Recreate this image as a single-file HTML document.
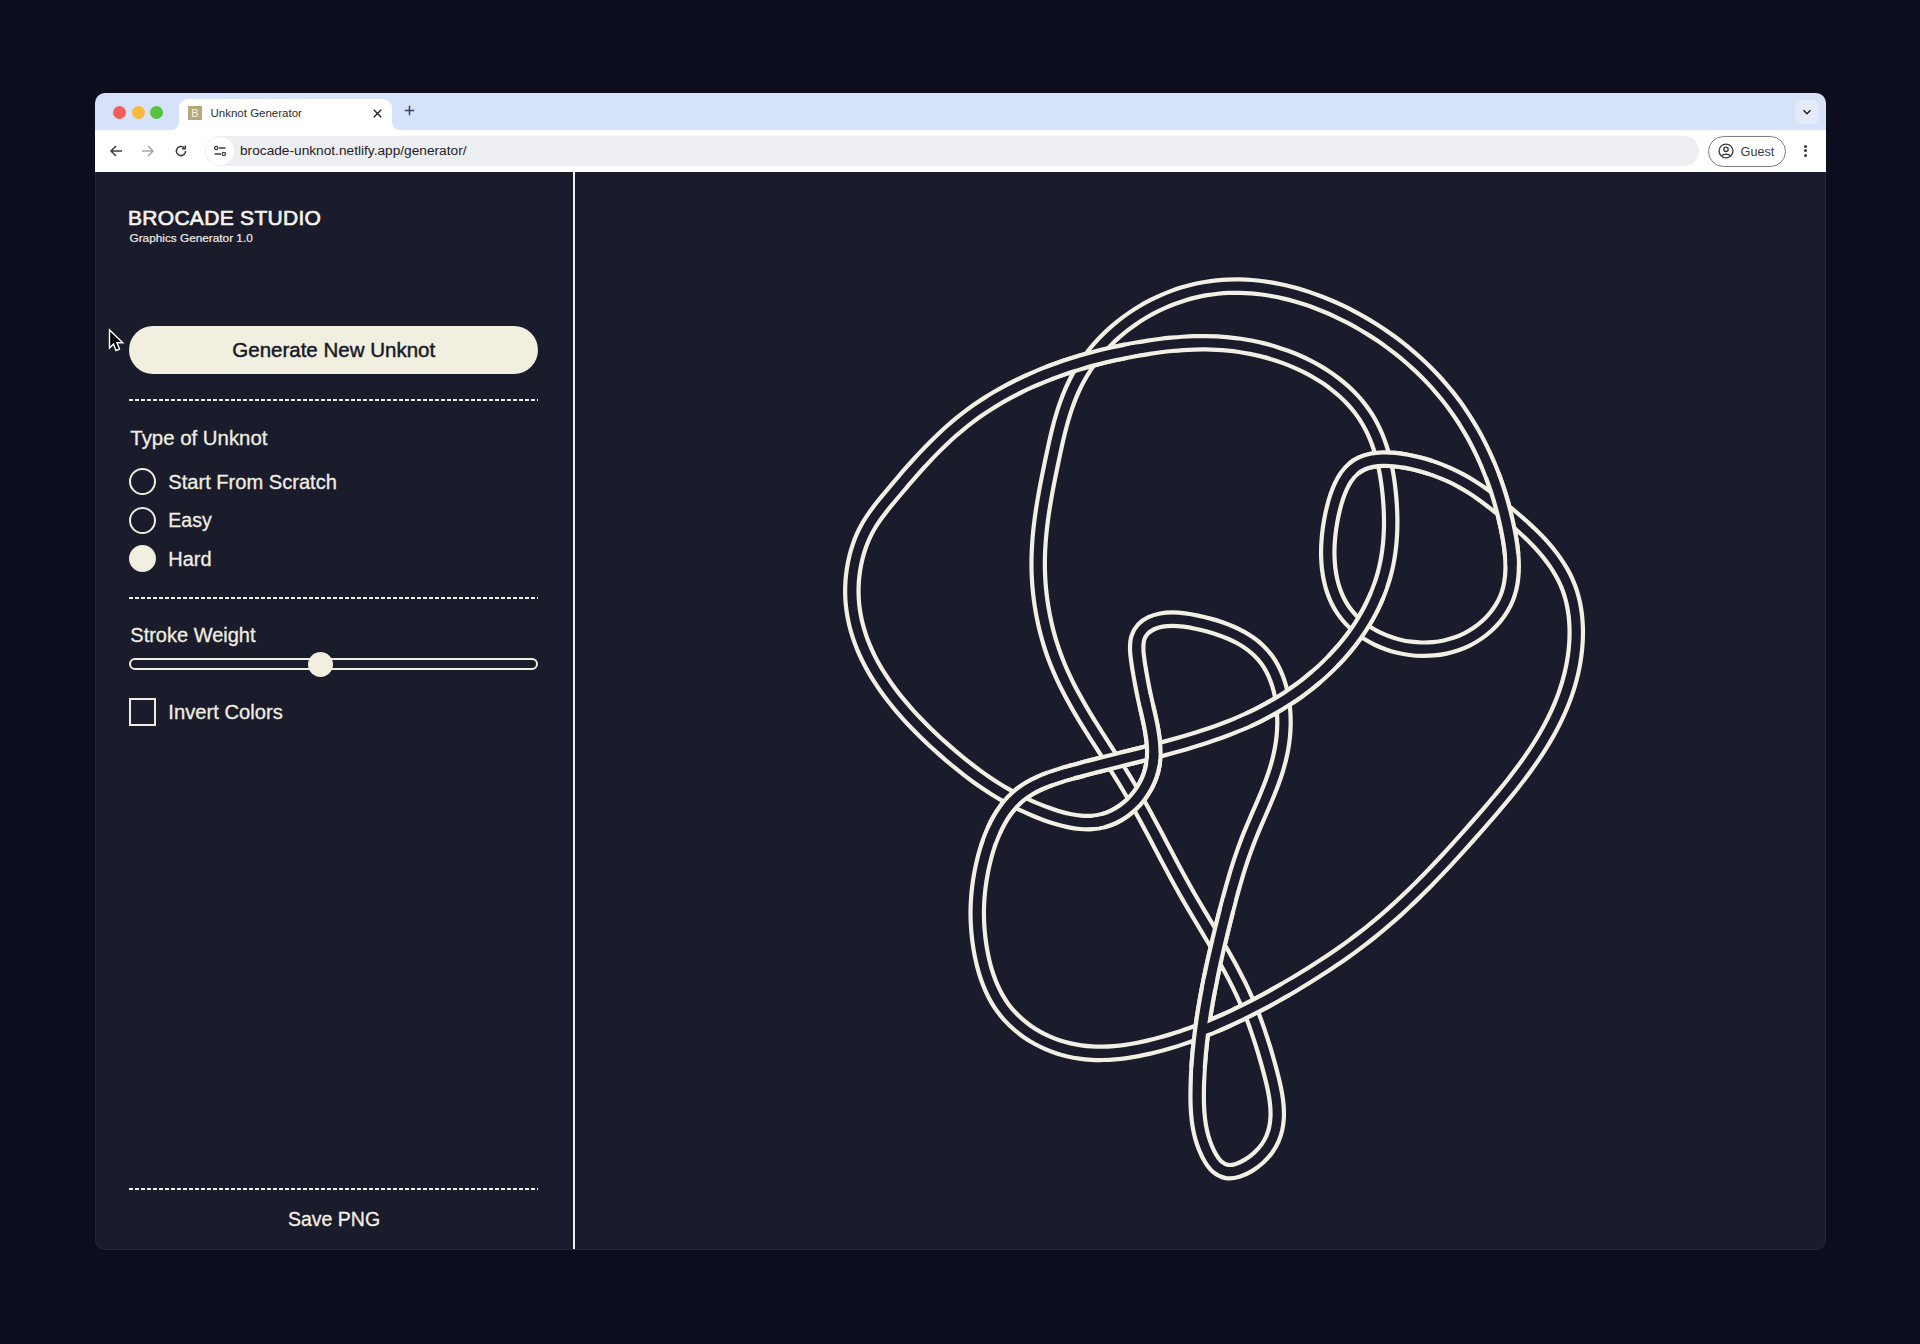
<!DOCTYPE html>
<html><head><meta charset="utf-8">
<style>
*{margin:0;padding:0;box-sizing:border-box}
html,body{width:1920px;height:1344px;overflow:hidden;background:#0c0d1f;font-family:"Liberation Sans",sans-serif}
.abs{position:absolute}
#win{position:absolute;left:95px;top:93px;width:1731px;height:1157px;border-radius:10px;overflow:hidden;background:#1a1b2b}
#tabbar{position:absolute;left:0;top:0;width:1731px;height:37px;background:#d5e2f9}
#toolbar{position:absolute;left:0;top:37px;width:1731px;height:42px;background:#fff}
#content{position:absolute;left:0;top:79px;width:1731px;height:1078px;background:#1a1b2b}
.t{position:absolute;white-space:nowrap;line-height:1}
.dash{position:absolute;left:34px;width:409px;height:2px;background:repeating-linear-gradient(to right,#f0eee0 0 4px,transparent 4px 6px)}
.radio{position:absolute;left:34px;width:27px;height:27px;border-radius:50%;border:2.2px solid #efede0}
.sb{-webkit-text-stroke:0.3px currentColor}
</style></head><body>
<div id="win">
  <div id="tabbar">
    <div class="abs" style="left:18px;top:12.5px;width:13px;height:13px;border-radius:50%;background:#f25f58"></div>
    <div class="abs" style="left:36.5px;top:12.5px;width:13px;height:13px;border-radius:50%;background:#f7b83c"></div>
    <div class="abs" style="left:55px;top:12.5px;width:13px;height:13px;border-radius:50%;background:#58c13f"></div>
    <!-- tab -->
    <div class="abs" style="left:84px;top:6px;width:213px;height:32px;background:#fff;border-radius:9px 9px 0 0"></div>
    <div class="abs" style="left:76px;top:29px;width:8px;height:8px;background:#fff"></div>
    <div class="abs" style="left:68px;top:21px;width:16px;height:16px;background:#d5e2f9;border-radius:0 0 8px 0"></div>
    <div class="abs" style="left:297px;top:29px;width:8px;height:8px;background:#fff"></div>
    <div class="abs" style="left:297px;top:21px;width:16px;height:16px;background:#d5e2f9;border-radius:0 0 0 8px"></div>
    <div class="abs" style="left:93px;top:13px;width:14px;height:14px;background:#b7a878;color:#f7f3e6;font-size:11px;line-height:14px;text-align:center">B</div>
    <div class="t" style="left:115.5px;top:15px;font-size:11.5px;color:#2a2c30">Unknot Generator</div>
    <svg class="abs" style="left:277px;top:15px" width="11" height="11" viewBox="0 0 11 11"><path d="M1.8 1.8L9.2 9.2M9.2 1.8L1.8 9.2" stroke="#2b2b2b" stroke-width="1.5"/></svg>
    <svg class="abs" style="left:309px;top:12px" width="11" height="11" viewBox="0 0 11 11"><path d="M5.5 0.8V10.2M0.8 5.5H10.2" stroke="#3d4350" stroke-width="1.5"/></svg>
    <div class="abs" style="left:1700px;top:7px;width:24px;height:24px;border-radius:7px;background:#e3eafa"></div>
    <svg class="abs" style="left:1707px;top:14px" width="10" height="10" viewBox="0 0 10 10"><path d="M1.5 3.2L5 6.7L8.5 3.2" stroke="#222" stroke-width="1.5" fill="none"/></svg>
  </div>
  <div id="toolbar">
    <svg class="abs" style="left:14px;top:14px" width="14" height="14" viewBox="0 0 14 14"><path d="M13 7H2.2M7 2L2 7L7 12" stroke="#3b3d42" stroke-width="1.5" fill="none"/></svg>
    <svg class="abs" style="left:46px;top:14px" width="14" height="14" viewBox="0 0 14 14"><path d="M1 7H11.8M7 2L12 7L7 12" stroke="#a4a6ab" stroke-width="1.5" fill="none"/></svg>
    <svg class="abs" style="left:79px;top:14px" width="14" height="14" viewBox="0 0 14 14"><path d="M11.6 7A4.6 4.6 0 1 1 10.3 3.8" stroke="#3b3d42" stroke-width="1.5" fill="none"/><path d="M11.3 1.5V4.8H8" stroke="#3b3d42" stroke-width="1.5" fill="none"/></svg>
    <div class="abs" style="left:110px;top:6px;width:1494px;height:30px;border-radius:15px;background:#eceef2"></div>
    <div class="abs" style="left:111px;top:7px;width:28px;height:28px;border-radius:50%;background:#fff"></div>
    <svg class="abs" style="left:118px;top:14px" width="14" height="14" viewBox="0 0 14 14"><circle cx="3.2" cy="4" r="1.6" stroke="#3b3d42" stroke-width="1.3" fill="none"/><path d="M6 4H12.5M1.5 10H8" stroke="#3b3d42" stroke-width="1.5"/><circle cx="10.8" cy="10" r="1.6" stroke="#3b3d42" stroke-width="1.3" fill="none"/></svg>
    <div class="t" style="left:145px;top:14px;font-size:13.7px;color:#1f2024">brocade-unknot.netlify.app/generator/</div>
    <div class="abs" style="left:1613px;top:6px;width:78px;height:31px;border-radius:16px;border:1px solid #7b7e85;background:#fff"></div>
    <svg class="abs" style="left:1623px;top:13px" width="16" height="16" viewBox="0 0 16 16"><circle cx="8" cy="8" r="6.9" stroke="#3b3d42" stroke-width="1.4" fill="none"/><circle cx="8" cy="6.3" r="2.2" stroke="#3b3d42" stroke-width="1.4" fill="none"/><path d="M3.6 12.9C5 10.6 11 10.6 12.4 12.9" stroke="#3b3d42" stroke-width="1.4" fill="none"/></svg>
    <div class="t" style="left:1645.6px;top:15.6px;font-size:12.6px;color:#3b3d42">Guest</div>
    <div class="abs" style="left:1709px;top:14.5px;width:3px;height:3px;border-radius:50%;background:#3b3d42"></div>
    <div class="abs" style="left:1709px;top:19px;width:3px;height:3px;border-radius:50%;background:#3b3d42"></div>
    <div class="abs" style="left:1709px;top:23.5px;width:3px;height:3px;border-radius:50%;background:#3b3d42"></div>
  </div>
  <div id="content">
    <!-- sidebar -->
    <div class="abs" style="left:478px;top:0;width:2px;height:1078px;background:#efeef3"></div>
    <div class="t" style="left:33px;top:35px;font-size:21px;color:#f4f2ea;letter-spacing:0.3px;-webkit-text-stroke:0.7px #f4f2ea">BROCADE STUDIO</div>
    <div class="t" style="left:34.5px;top:61px;font-size:11.8px;color:#efede5;-webkit-text-stroke:0.2px #efede5">Graphics Generator 1.0</div>
    <div class="abs" style="left:34px;top:154px;width:409px;height:48px;border-radius:24px;background:#f1efdf"></div>
    <div class="t" style="left:137.3px;top:167.8px;font-size:20.5px;color:#181926;-webkit-text-stroke:0.45px #181926">Generate New Unknot</div>
    <div class="dash" style="top:227px"></div>
    <div class="t sb" style="left:35.3px;top:256.2px;font-size:20.4px;color:#efede2">Type of Unknot</div>
    <div class="radio" style="top:296.4px"></div>
    <div class="t sb" style="left:73.3px;top:300px;font-size:20.1px;color:#efede2">Start From Scratch</div>
    <div class="radio" style="top:334.8px"></div>
    <div class="t sb" style="left:73.3px;top:338.6px;font-size:19.5px;color:#efede2">Easy</div>
    <div class="radio" style="top:373px;background:#f1efdf"></div>
    <div class="t sb" style="left:73.3px;top:377px;font-size:20px;color:#efede2">Hard</div>
    <div class="dash" style="top:425px"></div>
    <div class="t sb" style="left:35.3px;top:453.4px;font-size:20px;color:#efede2">Stroke Weight</div>
    <div class="abs" style="left:34px;top:485.7px;width:409px;height:12px;border-radius:6px;border:2px solid #efede0"></div>
    <div class="abs" style="left:213.2px;top:479.5px;width:25px;height:25px;border-radius:50%;background:#f1efdf"></div>
    <div class="abs" style="left:34px;top:526px;width:27px;height:28px;border:2.2px solid #efede0"></div>
    <div class="t sb" style="left:73.3px;top:530.3px;font-size:20.2px;color:#efede2">Invert Colors</div>
    <div class="dash" style="top:1016px"></div>
    <div class="t sb" style="left:193px;top:1037.5px;font-size:19.5px;color:#f2f0e6">Save PNG</div>
    <div class="abs" style="left:0;top:0;width:1731px;height:1078px;border:1px solid #25273a;border-top:none;border-radius:0 0 10px 10px"></div>
  </div>
</div>
<svg class="abs" style="left:104px;top:325px" width="24" height="30" viewBox="0 0 24 30"><path d="M5.5 5V23L9.5 19L12 25.5L15.5 24.2L13 17.8H18.8Z" fill="#000" stroke="#fff" stroke-width="1.4" stroke-linejoin="miter"/></svg>
<!--KNOT--><svg class="abs" style="left:0;top:0" width="1920" height="1344" viewBox="0 0 1920 1344">
<g fill="none" stroke-linejoin="round">
<path d="M980.59 875.61C981.26 871.81 982.02 867.95 982.90 864.12C983.77 860.28 984.75 856.41 985.85 852.60C986.95 848.79 988.17 844.98 989.51 841.26C990.86 837.54 992.33 833.86 993.94 830.30C995.56 826.75 997.30 823.26 999.20 819.94C1001.09 816.61 1003.13 813.39 1005.33 810.36C1007.53 807.34 1009.88 804.44 1012.41 801.78C1014.93 799.12 1017.63 796.65 1020.48 794.40C1023.33 792.15 1026.37 790.14 1029.51 788.27C1032.66 786.40 1035.97 784.74 1039.35 783.19C1042.73 781.63 1046.25 780.25 1049.81 778.94C1053.36 777.62 1057.03 776.45 1060.70 775.30C1064.37 774.16 1068.12 773.11 1071.85 772.07C1075.58 771.02 1079.34 770.02 1083.09 769.02C1086.84 768.03 1090.60 767.06 1094.37 766.09C1098.13 765.13 1101.89 764.18 1105.66 763.24C1109.42 762.30 1113.19 761.37 1116.96 760.44C1120.72 759.50 1124.49 758.58 1128.25 757.65C1132.01 756.72 1135.77 755.80 1139.52 754.86C1143.27 753.92 1147.02 752.98 1150.76 752.02C1154.50 751.07 1158.24 750.10 1161.96 749.12C1165.69 748.13 1169.40 747.13 1173.10 746.11C1176.81 745.09 1180.50 744.04 1184.18 742.97C1187.86 741.90 1191.52 740.80 1195.17 739.67C1198.82 738.54 1202.46 737.38 1206.07 736.18C1209.69 734.98 1213.29 733.75 1216.87 732.47C1220.44 731.19 1224.00 729.87 1227.54 728.51C1231.08 727.14 1234.59 725.73 1238.09 724.26C1241.58 722.79 1245.05 721.28 1248.49 719.70C1251.93 718.13 1255.35 716.50 1258.73 714.80C1262.12 713.11 1265.48 711.35 1268.81 709.53C1272.14 707.71 1275.44 705.82 1278.71 703.86C1281.98 701.89 1285.21 699.86 1288.41 697.76C1291.60 695.66 1294.76 693.49 1297.88 691.25C1300.99 689.02 1304.06 686.71 1307.08 684.34C1310.10 681.97 1313.07 679.54 1315.98 677.04C1318.89 674.54 1321.75 671.98 1324.55 669.36C1327.34 666.74 1330.08 664.05 1332.75 661.31C1335.41 658.56 1338.01 655.76 1340.54 652.90C1343.07 650.04 1345.52 647.12 1347.90 644.15C1350.27 641.17 1352.57 638.14 1354.78 635.06C1356.99 631.97 1359.13 628.83 1361.16 625.65C1363.20 622.46 1365.15 619.21 1367.00 615.92C1368.85 612.63 1370.61 609.28 1372.26 605.89C1373.92 602.50 1375.47 599.06 1376.92 595.58C1378.36 592.09 1379.71 588.56 1380.93 584.98C1382.15 581.41 1383.27 577.78 1384.26 574.12C1385.25 570.46 1386.13 566.74 1386.88 563.00C1387.64 559.25 1388.26 555.46 1388.78 551.65C1389.30 547.83 1389.71 543.98 1390.01 540.11C1390.32 536.25 1390.51 532.35 1390.61 528.45C1390.72 524.54 1390.72 520.62 1390.64 516.70C1390.57 512.78 1390.39 508.84 1390.15 504.92C1389.90 501.00 1389.58 497.07 1389.18 493.17C1388.78 489.26 1388.32 485.36 1387.76 481.50C1387.20 477.63 1386.57 473.78 1385.83 469.97C1385.09 466.17 1384.26 462.39 1383.32 458.68C1382.37 454.96 1381.33 451.29 1380.16 447.68C1378.99 444.08 1377.71 440.53 1376.28 437.07C1374.86 433.61 1373.31 430.21 1371.61 426.91C1369.92 423.61 1368.08 420.39 1366.09 417.27C1364.10 414.15 1361.95 411.13 1359.68 408.21C1357.41 405.29 1355.00 402.46 1352.47 399.73C1349.94 397.00 1347.27 394.37 1344.51 391.84C1341.74 389.30 1338.85 386.87 1335.88 384.53C1332.90 382.19 1329.81 379.95 1326.65 377.81C1323.48 375.66 1320.22 373.62 1316.89 371.67C1313.56 369.72 1310.15 367.88 1306.68 366.13C1303.21 364.38 1299.67 362.73 1296.09 361.17C1292.50 359.62 1288.85 358.17 1285.18 356.82C1281.50 355.46 1277.78 354.21 1274.03 353.05C1270.29 351.90 1266.51 350.84 1262.72 349.89C1258.93 348.93 1255.12 348.07 1251.31 347.32C1247.50 346.56 1243.68 345.91 1239.87 345.35C1236.06 344.79 1232.25 344.33 1228.44 343.96C1224.63 343.58 1220.82 343.31 1217.02 343.11C1213.21 342.91 1209.41 342.80 1205.61 342.76C1201.80 342.72 1198.00 342.77 1194.21 342.88C1190.41 342.98 1186.61 343.17 1182.82 343.42C1179.03 343.66 1175.24 343.98 1171.45 344.34C1167.67 344.71 1163.88 345.14 1160.10 345.62C1156.32 346.10 1152.55 346.63 1148.77 347.20C1145.00 347.78 1141.23 348.40 1137.47 349.06C1133.70 349.72 1129.94 350.42 1126.18 351.16C1122.43 351.90 1118.68 352.67 1114.94 353.49C1111.20 354.31 1107.46 355.17 1103.74 356.07C1100.02 356.97 1096.31 357.91 1092.61 358.90C1088.91 359.89 1085.23 360.92 1081.56 362.00C1077.89 363.08 1074.23 364.21 1070.60 365.38C1066.96 366.55 1063.34 367.77 1059.74 369.04C1056.14 370.32 1052.56 371.63 1049.01 373.00C1045.45 374.37 1041.92 375.79 1038.41 377.27C1034.90 378.74 1031.41 380.27 1027.96 381.85C1024.50 383.43 1021.07 385.06 1017.67 386.75C1014.27 388.45 1010.89 390.19 1007.55 392.00C1004.21 393.80 1000.90 395.66 997.63 397.58C994.36 399.50 991.12 401.48 987.91 403.52C984.71 405.56 981.54 407.66 978.41 409.83C975.28 411.99 972.19 414.22 969.15 416.51C966.10 418.80 963.09 421.15 960.12 423.57C957.16 425.99 954.24 428.48 951.36 431.02C948.48 433.56 945.64 436.17 942.83 438.81C940.03 441.46 937.27 444.16 934.53 446.90C931.80 449.63 929.11 452.42 926.44 455.22C923.78 458.03 921.15 460.88 918.54 463.74C915.94 466.60 913.36 469.49 910.81 472.39C908.26 475.29 905.74 478.21 903.24 481.13C900.74 484.05 898.26 486.99 895.81 489.91C893.35 492.84 890.90 495.75 888.49 498.68C886.08 501.60 883.67 504.49 881.35 507.45C879.04 510.41 876.75 513.37 874.61 516.45C872.47 519.52 870.39 522.63 868.51 525.90C866.62 529.16 864.86 532.53 863.28 536.01C861.71 539.50 860.29 543.12 859.04 546.79C857.79 550.46 856.70 554.24 855.77 558.04C854.85 561.84 854.09 565.72 853.49 569.60C852.89 573.47 852.45 577.39 852.18 581.28C851.91 585.16 851.80 589.06 851.85 592.91C851.90 596.75 852.12 600.56 852.49 604.33C852.86 608.11 853.39 611.84 854.06 615.53C854.72 619.23 855.54 622.89 856.49 626.50C857.43 630.12 858.52 633.70 859.73 637.24C860.93 640.78 862.27 644.29 863.72 647.75C865.17 651.21 866.74 654.63 868.41 658.02C870.08 661.40 871.87 664.75 873.74 668.05C875.62 671.36 877.60 674.62 879.66 677.84C881.72 681.07 883.88 684.25 886.11 687.40C888.33 690.54 890.65 693.65 893.02 696.71C895.40 699.77 897.85 702.80 900.36 705.78C902.86 708.76 905.44 711.70 908.05 714.60C910.67 717.50 913.34 720.36 916.05 723.17C918.76 725.99 921.51 728.77 924.29 731.50C927.07 734.23 929.89 736.93 932.73 739.58C935.56 742.23 938.43 744.83 941.30 747.40C944.17 749.96 947.05 752.49 949.95 754.97C952.84 757.45 955.74 759.88 958.67 762.27C961.59 764.66 964.53 767.01 967.49 769.30C970.45 771.60 973.43 773.85 976.45 776.04C979.47 778.24 982.51 780.39 985.59 782.48C988.67 784.57 991.78 786.61 994.93 788.59C998.09 790.58 1001.28 792.51 1004.53 794.38C1007.78 796.25 1011.07 798.06 1014.41 799.81C1017.76 801.57 1021.16 803.26 1024.62 804.89C1028.08 806.52 1031.59 808.09 1035.18 809.59C1038.76 811.09 1042.42 812.55 1046.13 813.89C1049.84 815.24 1053.64 816.56 1057.44 817.68C1061.24 818.80 1065.11 819.83 1068.95 820.61C1072.78 821.38 1076.65 822.02 1080.46 822.33C1084.27 822.65 1088.09 822.76 1091.82 822.49C1095.55 822.23 1099.25 821.67 1102.83 820.74C1106.42 819.81 1109.95 818.50 1113.32 816.92C1116.69 815.34 1119.97 813.40 1123.06 811.24C1126.15 809.09 1129.11 806.62 1131.84 803.97C1134.57 801.33 1137.13 798.42 1139.43 795.37C1141.73 792.33 1143.83 789.06 1145.62 785.70C1147.41 782.34 1148.97 778.81 1150.19 775.22C1151.41 771.64 1152.32 767.93 1152.92 764.20C1153.53 760.47 1153.76 756.66 1153.81 752.84C1153.85 749.03 1153.59 745.16 1153.21 741.29C1152.83 737.43 1152.20 733.54 1151.53 729.67C1150.86 725.80 1150.02 721.92 1149.19 718.10C1148.36 714.27 1147.43 710.45 1146.58 706.70C1145.73 702.95 1144.88 699.27 1144.10 695.58C1143.32 691.90 1142.60 688.30 1141.89 684.60C1141.18 680.90 1140.52 677.22 1139.87 673.37C1139.21 669.53 1138.48 665.53 1137.96 661.52C1137.43 657.50 1136.73 653.20 1136.71 649.28C1136.68 645.36 1136.78 641.38 1137.81 638.02C1138.84 634.67 1140.64 631.63 1142.88 629.17C1145.12 626.70 1148.17 624.76 1151.25 623.24C1154.32 621.73 1157.78 620.75 1161.33 620.06C1164.88 619.38 1168.70 619.16 1172.57 619.15C1176.43 619.14 1180.49 619.51 1184.51 620.01C1188.54 620.51 1192.68 621.30 1196.71 622.14C1200.75 622.99 1204.80 623.99 1208.73 625.07C1212.66 626.15 1216.54 627.32 1220.29 628.62C1224.05 629.92 1227.72 631.32 1231.25 632.88C1234.77 634.43 1238.20 636.11 1241.45 637.95C1244.71 639.80 1247.84 641.78 1250.78 643.94C1253.72 646.11 1256.51 648.43 1259.08 650.95C1261.66 653.47 1264.05 656.17 1266.22 659.07C1268.39 661.98 1270.35 665.10 1272.10 668.36C1273.85 671.62 1275.38 675.09 1276.73 678.64C1278.07 682.20 1279.21 685.92 1280.17 689.69C1281.13 693.47 1281.89 697.37 1282.48 701.29C1283.07 705.21 1283.48 709.21 1283.72 713.20C1283.96 717.19 1284.03 721.23 1283.94 725.22C1283.85 729.20 1283.59 733.19 1283.20 737.10C1282.80 741.01 1282.23 744.87 1281.55 748.66C1280.87 752.46 1280.04 756.18 1279.12 759.87C1278.19 763.56 1277.14 767.19 1276.02 770.79C1274.89 774.40 1273.66 777.95 1272.38 781.49C1271.10 785.02 1269.73 788.52 1268.33 792.02C1266.94 795.51 1265.48 798.97 1264.01 802.44C1262.54 805.90 1261.03 809.35 1259.53 812.81C1258.04 816.28 1256.52 819.73 1255.03 823.21C1253.55 826.68 1252.07 830.16 1250.64 833.68C1249.21 837.19 1247.82 840.72 1246.48 844.28C1245.14 847.84 1243.85 851.44 1242.60 855.05C1241.35 858.66 1240.15 862.30 1238.99 865.95C1237.82 869.60 1236.70 873.27 1235.60 876.96C1234.50 880.64 1233.44 884.35 1232.40 888.05C1231.36 891.76 1230.35 895.49 1229.36 899.21C1228.37 902.93 1227.40 906.67 1226.45 910.40C1225.49 914.13 1224.55 917.86 1223.62 921.59C1222.69 925.32 1221.77 929.05 1220.86 932.77C1219.96 936.50 1219.06 940.22 1218.18 943.95C1217.30 947.67 1216.44 951.39 1215.60 955.11C1214.75 958.84 1213.92 962.56 1213.12 966.29C1212.31 970.01 1211.52 973.74 1210.76 977.46C1209.99 981.19 1209.25 984.92 1208.54 988.65C1207.82 992.39 1207.13 996.12 1206.47 999.86C1205.81 1003.60 1205.17 1007.35 1204.57 1011.09C1203.96 1014.84 1203.39 1018.60 1202.85 1022.35C1202.31 1026.11 1201.80 1029.88 1201.33 1033.65C1200.86 1037.42 1200.42 1041.20 1200.02 1044.98C1199.62 1048.77 1199.26 1052.56 1198.94 1056.36C1198.61 1060.17 1198.33 1063.98 1198.09 1067.80C1197.86 1071.62 1197.66 1075.44 1197.51 1079.28C1197.36 1083.12 1197.24 1086.97 1197.20 1090.83C1197.15 1094.69 1197.13 1098.57 1197.23 1102.43C1197.34 1106.29 1197.50 1110.16 1197.83 1114.00C1198.16 1117.84 1198.59 1121.67 1199.23 1125.47C1199.88 1129.26 1200.65 1133.04 1201.69 1136.76C1202.72 1140.48 1203.93 1144.18 1205.43 1147.79C1206.93 1151.40 1208.64 1155.19 1210.70 1158.41C1212.75 1161.64 1215.06 1164.97 1217.76 1167.15C1220.45 1169.33 1223.54 1170.96 1226.86 1171.49C1230.19 1172.02 1234.02 1171.39 1237.68 1170.33C1241.34 1169.27 1245.28 1167.27 1248.80 1165.14C1252.32 1163.02 1255.79 1160.34 1258.80 1157.58C1261.81 1154.82 1264.57 1151.72 1266.85 1148.57C1269.13 1145.43 1270.99 1142.09 1272.48 1138.70C1273.98 1135.31 1275.02 1131.79 1275.80 1128.22C1276.59 1124.66 1276.98 1120.99 1277.17 1117.28C1277.35 1113.58 1277.22 1109.80 1276.93 1106.00C1276.64 1102.21 1276.09 1098.36 1275.45 1094.51C1274.81 1090.67 1273.96 1086.79 1273.08 1082.95C1272.20 1079.10 1271.19 1075.24 1270.19 1071.43C1269.18 1067.62 1268.14 1063.84 1267.07 1060.08C1266.01 1056.33 1264.92 1052.61 1263.80 1048.92C1262.68 1045.23 1261.53 1041.57 1260.33 1037.94C1259.14 1034.31 1257.92 1030.70 1256.65 1027.13C1255.39 1023.55 1254.08 1020.00 1252.73 1016.47C1251.37 1012.95 1249.97 1009.45 1248.52 1005.97C1247.07 1002.49 1245.57 999.04 1244.01 995.61C1242.46 992.18 1240.84 988.77 1239.18 985.38C1237.53 981.99 1235.81 978.62 1234.07 975.26C1232.32 971.91 1230.53 968.57 1228.71 965.24C1226.89 961.91 1225.03 958.60 1223.15 955.29C1221.27 951.99 1219.36 948.69 1217.44 945.40C1215.52 942.10 1213.58 938.82 1211.63 935.54C1209.69 932.25 1207.72 928.97 1205.76 925.69C1203.80 922.40 1201.83 919.12 1199.88 915.83C1197.92 912.54 1195.96 909.25 1194.02 905.95C1192.08 902.65 1190.15 899.35 1188.25 896.03C1186.34 892.71 1184.46 889.38 1182.59 886.04C1180.73 882.70 1178.89 879.34 1177.06 875.98C1175.23 872.62 1173.42 869.25 1171.62 865.88C1169.82 862.51 1168.03 859.13 1166.24 855.75C1164.46 852.37 1162.68 848.98 1160.90 845.60C1159.12 842.22 1157.34 838.84 1155.56 835.46C1153.77 832.08 1151.98 828.70 1150.18 825.33C1148.38 821.97 1146.58 818.60 1144.75 815.25C1142.93 811.90 1141.09 808.55 1139.23 805.22C1137.37 801.88 1135.49 798.56 1133.59 795.25C1131.68 791.95 1129.75 788.66 1127.79 785.38C1125.83 782.10 1123.84 778.85 1121.83 775.60C1119.82 772.36 1117.78 769.13 1115.74 765.90C1113.69 762.67 1111.62 759.46 1109.56 756.25C1107.50 753.03 1105.42 749.83 1103.36 746.62C1101.29 743.41 1099.22 740.20 1097.17 736.98C1095.13 733.76 1093.08 730.54 1091.06 727.31C1089.05 724.08 1087.04 720.84 1085.07 717.58C1083.10 714.32 1081.16 711.05 1079.25 707.76C1077.35 704.47 1075.48 701.16 1073.66 697.82C1071.84 694.49 1070.05 691.13 1068.33 687.75C1066.61 684.36 1064.94 680.95 1063.33 677.50C1061.73 674.05 1060.18 670.57 1058.70 667.05C1057.23 663.53 1055.82 659.98 1054.50 656.38C1053.18 652.78 1051.93 649.14 1050.76 645.46C1049.60 641.79 1048.51 638.08 1047.51 634.34C1046.50 630.60 1045.58 626.83 1044.73 623.05C1043.89 619.27 1043.13 615.46 1042.44 611.65C1041.76 607.83 1041.16 604.00 1040.64 600.17C1040.12 596.34 1039.68 592.50 1039.33 588.67C1038.97 584.84 1038.70 581.01 1038.51 577.19C1038.31 573.38 1038.21 569.57 1038.18 565.78C1038.15 561.99 1038.20 558.22 1038.32 554.45C1038.44 550.69 1038.64 546.93 1038.89 543.19C1039.14 539.44 1039.47 535.70 1039.84 531.97C1040.22 528.23 1040.66 524.51 1041.14 520.78C1041.62 517.05 1042.15 513.33 1042.72 509.60C1043.29 505.87 1043.91 502.15 1044.56 498.41C1045.20 494.68 1045.89 490.95 1046.60 487.20C1047.30 483.46 1048.04 479.71 1048.79 475.95C1049.54 472.19 1050.32 468.42 1051.10 464.63C1051.89 460.85 1052.68 457.05 1053.49 453.24C1054.30 449.44 1055.12 445.62 1055.99 441.81C1056.86 438.01 1057.75 434.20 1058.71 430.42C1059.67 426.64 1060.66 422.86 1061.74 419.12C1062.82 415.39 1063.95 411.67 1065.18 408.01C1066.42 404.35 1067.72 400.71 1069.14 397.14C1070.56 393.57 1072.07 390.05 1073.71 386.60C1075.35 383.15 1077.10 379.76 1078.97 376.44C1080.84 373.13 1082.83 369.88 1084.92 366.71C1087.01 363.54 1089.21 360.44 1091.51 357.42C1093.81 354.40 1096.21 351.45 1098.71 348.59C1101.20 345.73 1103.79 342.95 1106.46 340.26C1109.14 337.56 1111.90 334.95 1114.74 332.43C1117.58 329.91 1120.51 327.47 1123.50 325.13C1126.49 322.80 1129.57 320.54 1132.70 318.39C1135.83 316.24 1139.04 314.18 1142.29 312.23C1145.55 310.27 1148.87 308.41 1152.24 306.66C1155.61 304.91 1159.04 303.26 1162.51 301.72C1165.98 300.17 1169.50 298.74 1173.05 297.41C1176.60 296.09 1180.20 294.87 1183.82 293.77C1187.45 292.67 1191.11 291.68 1194.79 290.82C1198.47 289.95 1202.18 289.20 1205.90 288.57C1209.63 287.94 1213.37 287.44 1217.13 287.05C1220.88 286.67 1224.65 286.40 1228.43 286.25C1232.21 286.10 1236.00 286.07 1239.79 286.15C1243.58 286.22 1247.38 286.41 1251.18 286.70C1254.97 287.00 1258.77 287.40 1262.57 287.90C1266.36 288.40 1270.15 289.00 1273.93 289.70C1277.72 290.40 1281.49 291.20 1285.26 292.08C1289.02 292.97 1292.77 293.95 1296.51 295.02C1300.24 296.08 1303.96 297.24 1307.66 298.48C1311.36 299.71 1315.04 301.04 1318.69 302.43C1322.35 303.83 1325.98 305.31 1329.58 306.86C1333.18 308.41 1336.75 310.03 1340.29 311.73C1343.83 313.42 1347.34 315.18 1350.81 317.01C1354.28 318.83 1357.71 320.73 1361.10 322.67C1364.49 324.62 1367.85 326.64 1371.15 328.70C1374.46 330.76 1377.72 332.89 1380.93 335.05C1384.14 337.22 1387.30 339.44 1390.41 341.71C1393.52 343.98 1396.57 346.29 1399.57 348.66C1402.58 351.02 1405.53 353.43 1408.42 355.89C1411.32 358.35 1414.16 360.86 1416.95 363.41C1419.74 365.96 1422.47 368.57 1425.15 371.22C1427.82 373.87 1430.44 376.56 1433.01 379.31C1435.57 382.05 1438.08 384.85 1440.53 387.69C1442.98 390.53 1445.38 393.42 1447.71 396.35C1450.05 399.29 1452.33 402.27 1454.55 405.30C1456.76 408.34 1458.92 411.42 1461.02 414.54C1463.12 417.67 1465.16 420.84 1467.14 424.06C1469.12 427.28 1471.04 430.55 1472.90 433.86C1474.75 437.17 1476.55 440.53 1478.29 443.92C1480.02 447.31 1481.70 450.75 1483.31 454.22C1484.93 457.69 1486.48 461.19 1487.97 464.73C1489.46 468.27 1490.89 471.84 1492.26 475.45C1493.63 479.05 1494.94 482.68 1496.19 486.34C1497.43 490.00 1498.62 493.69 1499.74 497.40C1500.86 501.11 1501.93 504.84 1502.93 508.60C1503.93 512.35 1504.86 516.13 1505.74 519.92C1506.61 523.71 1507.44 527.52 1508.18 531.34C1508.92 535.16 1509.63 539.01 1510.20 542.83C1510.77 546.66 1511.28 550.50 1511.60 554.31C1511.93 558.12 1512.16 561.92 1512.17 565.68C1512.18 569.43 1512.05 573.17 1511.67 576.84C1511.29 580.52 1510.73 584.15 1509.89 587.71C1509.04 591.27 1507.97 594.78 1506.59 598.19C1505.20 601.60 1503.52 604.96 1501.56 608.18C1499.60 611.41 1497.32 614.56 1494.84 617.53C1492.35 620.49 1489.59 623.36 1486.68 625.99C1483.77 628.63 1480.62 631.12 1477.37 633.35C1474.12 635.58 1470.69 637.61 1467.19 639.37C1463.70 641.14 1460.06 642.65 1456.39 643.93C1452.71 645.21 1448.92 646.24 1445.12 647.05C1441.31 647.86 1437.43 648.44 1433.55 648.79C1429.68 649.15 1425.75 649.28 1421.86 649.20C1417.97 649.12 1414.05 648.82 1410.20 648.32C1406.35 647.83 1402.50 647.11 1398.74 646.21C1394.98 645.31 1391.25 644.20 1387.64 642.91C1384.03 641.62 1380.48 640.14 1377.07 638.48C1373.66 636.82 1370.34 634.97 1367.19 632.95C1364.04 630.94 1361.01 628.74 1358.17 626.39C1355.33 624.04 1352.64 621.51 1350.17 618.84C1347.70 616.16 1345.41 613.32 1343.35 610.35C1341.30 607.37 1339.47 604.23 1337.85 600.97C1336.23 597.72 1334.83 594.32 1333.63 590.83C1332.42 587.35 1331.42 583.73 1330.60 580.05C1329.78 576.37 1329.15 572.58 1328.69 568.74C1328.23 564.91 1327.96 560.99 1327.83 557.04C1327.71 553.10 1327.76 549.08 1327.94 545.07C1328.13 541.05 1328.47 536.99 1328.94 532.95C1329.41 528.90 1330.02 524.83 1330.75 520.80C1331.48 516.77 1332.32 512.71 1333.30 508.76C1334.28 504.80 1335.34 500.82 1336.61 497.06C1337.87 493.30 1339.26 489.59 1340.88 486.18C1342.51 482.78 1344.29 479.51 1346.35 476.63C1348.41 473.75 1350.67 471.09 1353.24 468.89C1355.80 466.69 1358.66 464.88 1361.75 463.44C1364.83 462.01 1368.23 461.01 1371.74 460.29C1375.26 459.57 1379.02 459.23 1382.83 459.11C1386.65 458.99 1390.64 459.20 1394.62 459.57C1398.60 459.94 1402.69 460.58 1406.71 461.32C1410.72 462.07 1414.77 463.03 1418.69 464.05C1422.61 465.06 1426.47 466.21 1430.22 467.43C1433.97 468.65 1437.63 469.97 1441.20 471.38C1444.78 472.79 1448.26 474.30 1451.67 475.90C1455.08 477.50 1458.40 479.20 1461.66 480.99C1464.92 482.78 1468.08 484.67 1471.21 486.64C1474.34 488.60 1477.39 490.66 1480.43 492.78C1483.46 494.90 1486.44 497.10 1489.43 499.34C1492.41 501.58 1495.36 503.90 1498.32 506.24C1501.29 508.59 1504.26 510.98 1507.22 513.41C1510.18 515.85 1513.16 518.32 1516.10 520.84C1519.03 523.36 1521.97 525.93 1524.83 528.55C1527.69 531.17 1530.53 533.84 1533.28 536.57C1536.02 539.30 1538.73 542.09 1541.31 544.94C1543.90 547.80 1546.42 550.71 1548.80 553.69C1551.18 556.67 1553.47 559.72 1555.61 562.85C1557.74 565.97 1559.76 569.17 1561.60 572.44C1563.44 575.72 1565.15 579.07 1566.65 582.51C1568.16 585.95 1569.49 589.48 1570.63 593.08C1571.77 596.68 1572.71 600.38 1573.49 604.11C1574.27 607.84 1574.87 611.65 1575.32 615.48C1575.76 619.30 1576.04 623.18 1576.18 627.06C1576.31 630.94 1576.29 634.85 1576.14 638.73C1576.00 642.62 1575.70 646.52 1575.29 650.38C1574.89 654.23 1574.34 658.08 1573.70 661.87C1573.06 665.65 1572.29 669.40 1571.43 673.11C1570.56 676.82 1569.59 680.48 1568.52 684.11C1567.45 687.73 1566.28 691.32 1565.02 694.87C1563.76 698.42 1562.40 701.93 1560.96 705.41C1559.53 708.88 1558.00 712.32 1556.39 715.73C1554.79 719.14 1553.10 722.51 1551.35 725.86C1549.60 729.20 1547.76 732.51 1545.87 735.79C1543.98 739.08 1542.01 742.33 1540.00 745.55C1537.98 748.78 1535.90 751.98 1533.77 755.15C1531.64 758.32 1529.45 761.47 1527.23 764.59C1525.00 767.72 1522.72 770.82 1520.41 773.89C1518.10 776.97 1515.74 780.03 1513.36 783.07C1510.98 786.11 1508.55 789.12 1506.11 792.12C1503.67 795.12 1501.20 798.11 1498.71 801.07C1496.23 804.04 1493.72 806.99 1491.20 809.93C1488.68 812.87 1486.14 815.79 1483.61 818.70C1481.07 821.62 1478.53 824.52 1475.99 827.41C1473.44 830.30 1470.90 833.18 1468.35 836.05C1465.80 838.92 1463.25 841.78 1460.70 844.62C1458.14 847.46 1455.58 850.30 1453.00 853.11C1450.43 855.93 1447.85 858.73 1445.26 861.51C1442.67 864.30 1440.07 867.07 1437.46 869.82C1434.85 872.57 1432.22 875.30 1429.58 878.02C1426.94 880.73 1424.28 883.43 1421.61 886.11C1418.93 888.78 1416.24 891.44 1413.53 894.07C1410.81 896.71 1408.08 899.32 1405.33 901.91C1402.57 904.50 1399.80 907.07 1397.00 909.61C1394.19 912.15 1391.37 914.67 1388.52 917.16C1385.66 919.65 1382.78 922.12 1379.87 924.55C1376.96 926.99 1374.03 929.40 1371.06 931.79C1368.09 934.17 1365.08 936.52 1362.05 938.85C1359.02 941.17 1355.96 943.47 1352.87 945.74C1349.78 948.01 1346.67 950.25 1343.53 952.46C1340.39 954.68 1337.23 956.87 1334.05 959.03C1330.87 961.19 1327.67 963.32 1324.46 965.43C1321.24 967.54 1318.01 969.62 1314.76 971.68C1311.52 973.74 1308.25 975.77 1304.98 977.78C1301.71 979.79 1298.43 981.78 1295.14 983.74C1291.86 985.70 1288.56 987.64 1285.26 989.55C1281.96 991.46 1278.65 993.35 1275.33 995.21C1272.02 997.07 1268.69 998.91 1265.36 1000.72C1262.02 1002.52 1258.67 1004.30 1255.31 1006.05C1251.96 1007.80 1248.58 1009.51 1245.20 1011.20C1241.81 1012.88 1238.41 1014.53 1234.99 1016.15C1231.57 1017.77 1228.14 1019.35 1224.69 1020.89C1221.23 1022.44 1217.76 1023.95 1214.27 1025.41C1210.78 1026.88 1207.27 1028.31 1203.73 1029.70C1200.20 1031.09 1196.64 1032.44 1193.06 1033.74C1189.48 1035.05 1185.87 1036.31 1182.24 1037.53C1178.61 1038.74 1174.95 1039.92 1171.26 1041.04C1167.58 1042.16 1163.86 1043.25 1160.12 1044.26C1156.38 1045.28 1152.61 1046.25 1148.83 1047.14C1145.05 1048.02 1141.25 1048.84 1137.44 1049.57C1133.63 1050.29 1129.81 1050.94 1125.99 1051.47C1122.16 1052.00 1118.33 1052.44 1114.51 1052.75C1110.68 1053.06 1106.85 1053.27 1103.04 1053.32C1099.22 1053.38 1095.41 1053.32 1091.62 1053.10C1087.83 1052.88 1084.05 1052.53 1080.30 1051.99C1076.55 1051.46 1072.80 1050.78 1069.11 1049.91C1065.41 1049.05 1061.73 1048.02 1058.12 1046.82C1054.52 1045.62 1050.94 1044.26 1047.46 1042.73C1043.98 1041.21 1040.55 1039.52 1037.24 1037.67C1033.92 1035.83 1030.68 1033.82 1027.57 1031.66C1024.46 1029.50 1021.44 1027.18 1018.58 1024.71C1015.71 1022.25 1012.96 1019.62 1010.38 1016.86C1007.80 1014.09 1005.35 1011.17 1003.09 1008.11C1000.83 1005.05 998.74 1001.83 996.82 998.50C994.91 995.17 993.17 991.69 991.59 988.14C990.00 984.60 988.58 980.92 987.30 977.22C986.01 973.51 984.89 969.71 983.88 965.90C982.87 962.10 982.01 958.23 981.25 954.39C980.49 950.56 979.87 946.69 979.33 942.87C978.80 939.05 978.37 935.26 978.04 931.50C977.71 927.74 977.49 924.02 977.36 920.30C977.23 916.58 977.20 912.89 977.27 909.19C977.34 905.49 977.51 901.81 977.78 898.09C978.05 894.38 978.42 890.68 978.89 886.93C979.36 883.18 979.92 879.42 980.59 875.61Z" stroke="#f2f0e4" stroke-width="17.6"/>
<path d="M980.59 875.61C981.26 871.81 982.02 867.95 982.90 864.12C983.77 860.28 984.75 856.41 985.85 852.60C986.95 848.79 988.17 844.98 989.51 841.26C990.86 837.54 992.33 833.86 993.94 830.30C995.56 826.75 997.30 823.26 999.20 819.94C1001.09 816.61 1003.13 813.39 1005.33 810.36C1007.53 807.34 1009.88 804.44 1012.41 801.78C1014.93 799.12 1017.63 796.65 1020.48 794.40C1023.33 792.15 1026.37 790.14 1029.51 788.27C1032.66 786.40 1035.97 784.74 1039.35 783.19C1042.73 781.63 1046.25 780.25 1049.81 778.94C1053.36 777.62 1057.03 776.45 1060.70 775.30C1064.37 774.16 1068.12 773.11 1071.85 772.07C1075.58 771.02 1079.34 770.02 1083.09 769.02C1086.84 768.03 1090.60 767.06 1094.37 766.09C1098.13 765.13 1101.89 764.18 1105.66 763.24C1109.42 762.30 1113.19 761.37 1116.96 760.44C1120.72 759.50 1124.49 758.58 1128.25 757.65C1132.01 756.72 1135.77 755.80 1139.52 754.86C1143.27 753.92 1147.02 752.98 1150.76 752.02C1154.50 751.07 1158.24 750.10 1161.96 749.12C1165.69 748.13 1169.40 747.13 1173.10 746.11C1176.81 745.09 1180.50 744.04 1184.18 742.97C1187.86 741.90 1191.52 740.80 1195.17 739.67C1198.82 738.54 1202.46 737.38 1206.07 736.18C1209.69 734.98 1213.29 733.75 1216.87 732.47C1220.44 731.19 1224.00 729.87 1227.54 728.51C1231.08 727.14 1234.59 725.73 1238.09 724.26C1241.58 722.79 1245.05 721.28 1248.49 719.70C1251.93 718.13 1255.35 716.50 1258.73 714.80C1262.12 713.11 1265.48 711.35 1268.81 709.53C1272.14 707.71 1275.44 705.82 1278.71 703.86C1281.98 701.89 1285.21 699.86 1288.41 697.76C1291.60 695.66 1294.76 693.49 1297.88 691.25C1300.99 689.02 1304.06 686.71 1307.08 684.34C1310.10 681.97 1313.07 679.54 1315.98 677.04C1318.89 674.54 1321.75 671.98 1324.55 669.36C1327.34 666.74 1330.08 664.05 1332.75 661.31C1335.41 658.56 1338.01 655.76 1340.54 652.90C1343.07 650.04 1345.52 647.12 1347.90 644.15C1350.27 641.17 1352.57 638.14 1354.78 635.06C1356.99 631.97 1359.13 628.83 1361.16 625.65C1363.20 622.46 1365.15 619.21 1367.00 615.92C1368.85 612.63 1370.61 609.28 1372.26 605.89C1373.92 602.50 1375.47 599.06 1376.92 595.58C1378.36 592.09 1379.71 588.56 1380.93 584.98C1382.15 581.41 1383.27 577.78 1384.26 574.12C1385.25 570.46 1386.13 566.74 1386.88 563.00C1387.64 559.25 1388.26 555.46 1388.78 551.65C1389.30 547.83 1389.71 543.98 1390.01 540.11C1390.32 536.25 1390.51 532.35 1390.61 528.45C1390.72 524.54 1390.72 520.62 1390.64 516.70C1390.57 512.78 1390.39 508.84 1390.15 504.92C1389.90 501.00 1389.58 497.07 1389.18 493.17C1388.78 489.26 1388.32 485.36 1387.76 481.50C1387.20 477.63 1386.57 473.78 1385.83 469.97C1385.09 466.17 1384.26 462.39 1383.32 458.68C1382.37 454.96 1381.33 451.29 1380.16 447.68C1378.99 444.08 1377.71 440.53 1376.28 437.07C1374.86 433.61 1373.31 430.21 1371.61 426.91C1369.92 423.61 1368.08 420.39 1366.09 417.27C1364.10 414.15 1361.95 411.13 1359.68 408.21C1357.41 405.29 1355.00 402.46 1352.47 399.73C1349.94 397.00 1347.27 394.37 1344.51 391.84C1341.74 389.30 1338.85 386.87 1335.88 384.53C1332.90 382.19 1329.81 379.95 1326.65 377.81C1323.48 375.66 1320.22 373.62 1316.89 371.67C1313.56 369.72 1310.15 367.88 1306.68 366.13C1303.21 364.38 1299.67 362.73 1296.09 361.17C1292.50 359.62 1288.85 358.17 1285.18 356.82C1281.50 355.46 1277.78 354.21 1274.03 353.05C1270.29 351.90 1266.51 350.84 1262.72 349.89C1258.93 348.93 1255.12 348.07 1251.31 347.32C1247.50 346.56 1243.68 345.91 1239.87 345.35C1236.06 344.79 1232.25 344.33 1228.44 343.96C1224.63 343.58 1220.82 343.31 1217.02 343.11C1213.21 342.91 1209.41 342.80 1205.61 342.76C1201.80 342.72 1198.00 342.77 1194.21 342.88C1190.41 342.98 1186.61 343.17 1182.82 343.42C1179.03 343.66 1175.24 343.98 1171.45 344.34C1167.67 344.71 1163.88 345.14 1160.10 345.62C1156.32 346.10 1152.55 346.63 1148.77 347.20C1145.00 347.78 1141.23 348.40 1137.47 349.06C1133.70 349.72 1129.94 350.42 1126.18 351.16C1122.43 351.90 1118.68 352.67 1114.94 353.49C1111.20 354.31 1107.46 355.17 1103.74 356.07C1100.02 356.97 1096.31 357.91 1092.61 358.90C1088.91 359.89 1085.23 360.92 1081.56 362.00C1077.89 363.08 1074.23 364.21 1070.60 365.38C1066.96 366.55 1063.34 367.77 1059.74 369.04C1056.14 370.32 1052.56 371.63 1049.01 373.00C1045.45 374.37 1041.92 375.79 1038.41 377.27C1034.90 378.74 1031.41 380.27 1027.96 381.85C1024.50 383.43 1021.07 385.06 1017.67 386.75C1014.27 388.45 1010.89 390.19 1007.55 392.00C1004.21 393.80 1000.90 395.66 997.63 397.58C994.36 399.50 991.12 401.48 987.91 403.52C984.71 405.56 981.54 407.66 978.41 409.83C975.28 411.99 972.19 414.22 969.15 416.51C966.10 418.80 963.09 421.15 960.12 423.57C957.16 425.99 954.24 428.48 951.36 431.02C948.48 433.56 945.64 436.17 942.83 438.81C940.03 441.46 937.27 444.16 934.53 446.90C931.80 449.63 929.11 452.42 926.44 455.22C923.78 458.03 921.15 460.88 918.54 463.74C915.94 466.60 913.36 469.49 910.81 472.39C908.26 475.29 905.74 478.21 903.24 481.13C900.74 484.05 898.26 486.99 895.81 489.91C893.35 492.84 890.90 495.75 888.49 498.68C886.08 501.60 883.67 504.49 881.35 507.45C879.04 510.41 876.75 513.37 874.61 516.45C872.47 519.52 870.39 522.63 868.51 525.90C866.62 529.16 864.86 532.53 863.28 536.01C861.71 539.50 860.29 543.12 859.04 546.79C857.79 550.46 856.70 554.24 855.77 558.04C854.85 561.84 854.09 565.72 853.49 569.60C852.89 573.47 852.45 577.39 852.18 581.28C851.91 585.16 851.80 589.06 851.85 592.91C851.90 596.75 852.12 600.56 852.49 604.33C852.86 608.11 853.39 611.84 854.06 615.53C854.72 619.23 855.54 622.89 856.49 626.50C857.43 630.12 858.52 633.70 859.73 637.24C860.93 640.78 862.27 644.29 863.72 647.75C865.17 651.21 866.74 654.63 868.41 658.02C870.08 661.40 871.87 664.75 873.74 668.05C875.62 671.36 877.60 674.62 879.66 677.84C881.72 681.07 883.88 684.25 886.11 687.40C888.33 690.54 890.65 693.65 893.02 696.71C895.40 699.77 897.85 702.80 900.36 705.78C902.86 708.76 905.44 711.70 908.05 714.60C910.67 717.50 913.34 720.36 916.05 723.17C918.76 725.99 921.51 728.77 924.29 731.50C927.07 734.23 929.89 736.93 932.73 739.58C935.56 742.23 938.43 744.83 941.30 747.40C944.17 749.96 947.05 752.49 949.95 754.97C952.84 757.45 955.74 759.88 958.67 762.27C961.59 764.66 964.53 767.01 967.49 769.30C970.45 771.60 973.43 773.85 976.45 776.04C979.47 778.24 982.51 780.39 985.59 782.48C988.67 784.57 991.78 786.61 994.93 788.59C998.09 790.58 1001.28 792.51 1004.53 794.38C1007.78 796.25 1011.07 798.06 1014.41 799.81C1017.76 801.57 1021.16 803.26 1024.62 804.89C1028.08 806.52 1031.59 808.09 1035.18 809.59C1038.76 811.09 1042.42 812.55 1046.13 813.89C1049.84 815.24 1053.64 816.56 1057.44 817.68C1061.24 818.80 1065.11 819.83 1068.95 820.61C1072.78 821.38 1076.65 822.02 1080.46 822.33C1084.27 822.65 1088.09 822.76 1091.82 822.49C1095.55 822.23 1099.25 821.67 1102.83 820.74C1106.42 819.81 1109.95 818.50 1113.32 816.92C1116.69 815.34 1119.97 813.40 1123.06 811.24C1126.15 809.09 1129.11 806.62 1131.84 803.97C1134.57 801.33 1137.13 798.42 1139.43 795.37C1141.73 792.33 1143.83 789.06 1145.62 785.70C1147.41 782.34 1148.97 778.81 1150.19 775.22C1151.41 771.64 1152.32 767.93 1152.92 764.20C1153.53 760.47 1153.76 756.66 1153.81 752.84C1153.85 749.03 1153.59 745.16 1153.21 741.29C1152.83 737.43 1152.20 733.54 1151.53 729.67C1150.86 725.80 1150.02 721.92 1149.19 718.10C1148.36 714.27 1147.43 710.45 1146.58 706.70C1145.73 702.95 1144.88 699.27 1144.10 695.58C1143.32 691.90 1142.60 688.30 1141.89 684.60C1141.18 680.90 1140.52 677.22 1139.87 673.37C1139.21 669.53 1138.48 665.53 1137.96 661.52C1137.43 657.50 1136.73 653.20 1136.71 649.28C1136.68 645.36 1136.78 641.38 1137.81 638.02C1138.84 634.67 1140.64 631.63 1142.88 629.17C1145.12 626.70 1148.17 624.76 1151.25 623.24C1154.32 621.73 1157.78 620.75 1161.33 620.06C1164.88 619.38 1168.70 619.16 1172.57 619.15C1176.43 619.14 1180.49 619.51 1184.51 620.01C1188.54 620.51 1192.68 621.30 1196.71 622.14C1200.75 622.99 1204.80 623.99 1208.73 625.07C1212.66 626.15 1216.54 627.32 1220.29 628.62C1224.05 629.92 1227.72 631.32 1231.25 632.88C1234.77 634.43 1238.20 636.11 1241.45 637.95C1244.71 639.80 1247.84 641.78 1250.78 643.94C1253.72 646.11 1256.51 648.43 1259.08 650.95C1261.66 653.47 1264.05 656.17 1266.22 659.07C1268.39 661.98 1270.35 665.10 1272.10 668.36C1273.85 671.62 1275.38 675.09 1276.73 678.64C1278.07 682.20 1279.21 685.92 1280.17 689.69C1281.13 693.47 1281.89 697.37 1282.48 701.29C1283.07 705.21 1283.48 709.21 1283.72 713.20C1283.96 717.19 1284.03 721.23 1283.94 725.22C1283.85 729.20 1283.59 733.19 1283.20 737.10C1282.80 741.01 1282.23 744.87 1281.55 748.66C1280.87 752.46 1280.04 756.18 1279.12 759.87C1278.19 763.56 1277.14 767.19 1276.02 770.79C1274.89 774.40 1273.66 777.95 1272.38 781.49C1271.10 785.02 1269.73 788.52 1268.33 792.02C1266.94 795.51 1265.48 798.97 1264.01 802.44C1262.54 805.90 1261.03 809.35 1259.53 812.81C1258.04 816.28 1256.52 819.73 1255.03 823.21C1253.55 826.68 1252.07 830.16 1250.64 833.68C1249.21 837.19 1247.82 840.72 1246.48 844.28C1245.14 847.84 1243.85 851.44 1242.60 855.05C1241.35 858.66 1240.15 862.30 1238.99 865.95C1237.82 869.60 1236.70 873.27 1235.60 876.96C1234.50 880.64 1233.44 884.35 1232.40 888.05C1231.36 891.76 1230.35 895.49 1229.36 899.21C1228.37 902.93 1227.40 906.67 1226.45 910.40C1225.49 914.13 1224.55 917.86 1223.62 921.59C1222.69 925.32 1221.77 929.05 1220.86 932.77C1219.96 936.50 1219.06 940.22 1218.18 943.95C1217.30 947.67 1216.44 951.39 1215.60 955.11C1214.75 958.84 1213.92 962.56 1213.12 966.29C1212.31 970.01 1211.52 973.74 1210.76 977.46C1209.99 981.19 1209.25 984.92 1208.54 988.65C1207.82 992.39 1207.13 996.12 1206.47 999.86C1205.81 1003.60 1205.17 1007.35 1204.57 1011.09C1203.96 1014.84 1203.39 1018.60 1202.85 1022.35C1202.31 1026.11 1201.80 1029.88 1201.33 1033.65C1200.86 1037.42 1200.42 1041.20 1200.02 1044.98C1199.62 1048.77 1199.26 1052.56 1198.94 1056.36C1198.61 1060.17 1198.33 1063.98 1198.09 1067.80C1197.86 1071.62 1197.66 1075.44 1197.51 1079.28C1197.36 1083.12 1197.24 1086.97 1197.20 1090.83C1197.15 1094.69 1197.13 1098.57 1197.23 1102.43C1197.34 1106.29 1197.50 1110.16 1197.83 1114.00C1198.16 1117.84 1198.59 1121.67 1199.23 1125.47C1199.88 1129.26 1200.65 1133.04 1201.69 1136.76C1202.72 1140.48 1203.93 1144.18 1205.43 1147.79C1206.93 1151.40 1208.64 1155.19 1210.70 1158.41C1212.75 1161.64 1215.06 1164.97 1217.76 1167.15C1220.45 1169.33 1223.54 1170.96 1226.86 1171.49C1230.19 1172.02 1234.02 1171.39 1237.68 1170.33C1241.34 1169.27 1245.28 1167.27 1248.80 1165.14C1252.32 1163.02 1255.79 1160.34 1258.80 1157.58C1261.81 1154.82 1264.57 1151.72 1266.85 1148.57C1269.13 1145.43 1270.99 1142.09 1272.48 1138.70C1273.98 1135.31 1275.02 1131.79 1275.80 1128.22C1276.59 1124.66 1276.98 1120.99 1277.17 1117.28C1277.35 1113.58 1277.22 1109.80 1276.93 1106.00C1276.64 1102.21 1276.09 1098.36 1275.45 1094.51C1274.81 1090.67 1273.96 1086.79 1273.08 1082.95C1272.20 1079.10 1271.19 1075.24 1270.19 1071.43C1269.18 1067.62 1268.14 1063.84 1267.07 1060.08C1266.01 1056.33 1264.92 1052.61 1263.80 1048.92C1262.68 1045.23 1261.53 1041.57 1260.33 1037.94C1259.14 1034.31 1257.92 1030.70 1256.65 1027.13C1255.39 1023.55 1254.08 1020.00 1252.73 1016.47C1251.37 1012.95 1249.97 1009.45 1248.52 1005.97C1247.07 1002.49 1245.57 999.04 1244.01 995.61C1242.46 992.18 1240.84 988.77 1239.18 985.38C1237.53 981.99 1235.81 978.62 1234.07 975.26C1232.32 971.91 1230.53 968.57 1228.71 965.24C1226.89 961.91 1225.03 958.60 1223.15 955.29C1221.27 951.99 1219.36 948.69 1217.44 945.40C1215.52 942.10 1213.58 938.82 1211.63 935.54C1209.69 932.25 1207.72 928.97 1205.76 925.69C1203.80 922.40 1201.83 919.12 1199.88 915.83C1197.92 912.54 1195.96 909.25 1194.02 905.95C1192.08 902.65 1190.15 899.35 1188.25 896.03C1186.34 892.71 1184.46 889.38 1182.59 886.04C1180.73 882.70 1178.89 879.34 1177.06 875.98C1175.23 872.62 1173.42 869.25 1171.62 865.88C1169.82 862.51 1168.03 859.13 1166.24 855.75C1164.46 852.37 1162.68 848.98 1160.90 845.60C1159.12 842.22 1157.34 838.84 1155.56 835.46C1153.77 832.08 1151.98 828.70 1150.18 825.33C1148.38 821.97 1146.58 818.60 1144.75 815.25C1142.93 811.90 1141.09 808.55 1139.23 805.22C1137.37 801.88 1135.49 798.56 1133.59 795.25C1131.68 791.95 1129.75 788.66 1127.79 785.38C1125.83 782.10 1123.84 778.85 1121.83 775.60C1119.82 772.36 1117.78 769.13 1115.74 765.90C1113.69 762.67 1111.62 759.46 1109.56 756.25C1107.50 753.03 1105.42 749.83 1103.36 746.62C1101.29 743.41 1099.22 740.20 1097.17 736.98C1095.13 733.76 1093.08 730.54 1091.06 727.31C1089.05 724.08 1087.04 720.84 1085.07 717.58C1083.10 714.32 1081.16 711.05 1079.25 707.76C1077.35 704.47 1075.48 701.16 1073.66 697.82C1071.84 694.49 1070.05 691.13 1068.33 687.75C1066.61 684.36 1064.94 680.95 1063.33 677.50C1061.73 674.05 1060.18 670.57 1058.70 667.05C1057.23 663.53 1055.82 659.98 1054.50 656.38C1053.18 652.78 1051.93 649.14 1050.76 645.46C1049.60 641.79 1048.51 638.08 1047.51 634.34C1046.50 630.60 1045.58 626.83 1044.73 623.05C1043.89 619.27 1043.13 615.46 1042.44 611.65C1041.76 607.83 1041.16 604.00 1040.64 600.17C1040.12 596.34 1039.68 592.50 1039.33 588.67C1038.97 584.84 1038.70 581.01 1038.51 577.19C1038.31 573.38 1038.21 569.57 1038.18 565.78C1038.15 561.99 1038.20 558.22 1038.32 554.45C1038.44 550.69 1038.64 546.93 1038.89 543.19C1039.14 539.44 1039.47 535.70 1039.84 531.97C1040.22 528.23 1040.66 524.51 1041.14 520.78C1041.62 517.05 1042.15 513.33 1042.72 509.60C1043.29 505.87 1043.91 502.15 1044.56 498.41C1045.20 494.68 1045.89 490.95 1046.60 487.20C1047.30 483.46 1048.04 479.71 1048.79 475.95C1049.54 472.19 1050.32 468.42 1051.10 464.63C1051.89 460.85 1052.68 457.05 1053.49 453.24C1054.30 449.44 1055.12 445.62 1055.99 441.81C1056.86 438.01 1057.75 434.20 1058.71 430.42C1059.67 426.64 1060.66 422.86 1061.74 419.12C1062.82 415.39 1063.95 411.67 1065.18 408.01C1066.42 404.35 1067.72 400.71 1069.14 397.14C1070.56 393.57 1072.07 390.05 1073.71 386.60C1075.35 383.15 1077.10 379.76 1078.97 376.44C1080.84 373.13 1082.83 369.88 1084.92 366.71C1087.01 363.54 1089.21 360.44 1091.51 357.42C1093.81 354.40 1096.21 351.45 1098.71 348.59C1101.20 345.73 1103.79 342.95 1106.46 340.26C1109.14 337.56 1111.90 334.95 1114.74 332.43C1117.58 329.91 1120.51 327.47 1123.50 325.13C1126.49 322.80 1129.57 320.54 1132.70 318.39C1135.83 316.24 1139.04 314.18 1142.29 312.23C1145.55 310.27 1148.87 308.41 1152.24 306.66C1155.61 304.91 1159.04 303.26 1162.51 301.72C1165.98 300.17 1169.50 298.74 1173.05 297.41C1176.60 296.09 1180.20 294.87 1183.82 293.77C1187.45 292.67 1191.11 291.68 1194.79 290.82C1198.47 289.95 1202.18 289.20 1205.90 288.57C1209.63 287.94 1213.37 287.44 1217.13 287.05C1220.88 286.67 1224.65 286.40 1228.43 286.25C1232.21 286.10 1236.00 286.07 1239.79 286.15C1243.58 286.22 1247.38 286.41 1251.18 286.70C1254.97 287.00 1258.77 287.40 1262.57 287.90C1266.36 288.40 1270.15 289.00 1273.93 289.70C1277.72 290.40 1281.49 291.20 1285.26 292.08C1289.02 292.97 1292.77 293.95 1296.51 295.02C1300.24 296.08 1303.96 297.24 1307.66 298.48C1311.36 299.71 1315.04 301.04 1318.69 302.43C1322.35 303.83 1325.98 305.31 1329.58 306.86C1333.18 308.41 1336.75 310.03 1340.29 311.73C1343.83 313.42 1347.34 315.18 1350.81 317.01C1354.28 318.83 1357.71 320.73 1361.10 322.67C1364.49 324.62 1367.85 326.64 1371.15 328.70C1374.46 330.76 1377.72 332.89 1380.93 335.05C1384.14 337.22 1387.30 339.44 1390.41 341.71C1393.52 343.98 1396.57 346.29 1399.57 348.66C1402.58 351.02 1405.53 353.43 1408.42 355.89C1411.32 358.35 1414.16 360.86 1416.95 363.41C1419.74 365.96 1422.47 368.57 1425.15 371.22C1427.82 373.87 1430.44 376.56 1433.01 379.31C1435.57 382.05 1438.08 384.85 1440.53 387.69C1442.98 390.53 1445.38 393.42 1447.71 396.35C1450.05 399.29 1452.33 402.27 1454.55 405.30C1456.76 408.34 1458.92 411.42 1461.02 414.54C1463.12 417.67 1465.16 420.84 1467.14 424.06C1469.12 427.28 1471.04 430.55 1472.90 433.86C1474.75 437.17 1476.55 440.53 1478.29 443.92C1480.02 447.31 1481.70 450.75 1483.31 454.22C1484.93 457.69 1486.48 461.19 1487.97 464.73C1489.46 468.27 1490.89 471.84 1492.26 475.45C1493.63 479.05 1494.94 482.68 1496.19 486.34C1497.43 490.00 1498.62 493.69 1499.74 497.40C1500.86 501.11 1501.93 504.84 1502.93 508.60C1503.93 512.35 1504.86 516.13 1505.74 519.92C1506.61 523.71 1507.44 527.52 1508.18 531.34C1508.92 535.16 1509.63 539.01 1510.20 542.83C1510.77 546.66 1511.28 550.50 1511.60 554.31C1511.93 558.12 1512.16 561.92 1512.17 565.68C1512.18 569.43 1512.05 573.17 1511.67 576.84C1511.29 580.52 1510.73 584.15 1509.89 587.71C1509.04 591.27 1507.97 594.78 1506.59 598.19C1505.20 601.60 1503.52 604.96 1501.56 608.18C1499.60 611.41 1497.32 614.56 1494.84 617.53C1492.35 620.49 1489.59 623.36 1486.68 625.99C1483.77 628.63 1480.62 631.12 1477.37 633.35C1474.12 635.58 1470.69 637.61 1467.19 639.37C1463.70 641.14 1460.06 642.65 1456.39 643.93C1452.71 645.21 1448.92 646.24 1445.12 647.05C1441.31 647.86 1437.43 648.44 1433.55 648.79C1429.68 649.15 1425.75 649.28 1421.86 649.20C1417.97 649.12 1414.05 648.82 1410.20 648.32C1406.35 647.83 1402.50 647.11 1398.74 646.21C1394.98 645.31 1391.25 644.20 1387.64 642.91C1384.03 641.62 1380.48 640.14 1377.07 638.48C1373.66 636.82 1370.34 634.97 1367.19 632.95C1364.04 630.94 1361.01 628.74 1358.17 626.39C1355.33 624.04 1352.64 621.51 1350.17 618.84C1347.70 616.16 1345.41 613.32 1343.35 610.35C1341.30 607.37 1339.47 604.23 1337.85 600.97C1336.23 597.72 1334.83 594.32 1333.63 590.83C1332.42 587.35 1331.42 583.73 1330.60 580.05C1329.78 576.37 1329.15 572.58 1328.69 568.74C1328.23 564.91 1327.96 560.99 1327.83 557.04C1327.71 553.10 1327.76 549.08 1327.94 545.07C1328.13 541.05 1328.47 536.99 1328.94 532.95C1329.41 528.90 1330.02 524.83 1330.75 520.80C1331.48 516.77 1332.32 512.71 1333.30 508.76C1334.28 504.80 1335.34 500.82 1336.61 497.06C1337.87 493.30 1339.26 489.59 1340.88 486.18C1342.51 482.78 1344.29 479.51 1346.35 476.63C1348.41 473.75 1350.67 471.09 1353.24 468.89C1355.80 466.69 1358.66 464.88 1361.75 463.44C1364.83 462.01 1368.23 461.01 1371.74 460.29C1375.26 459.57 1379.02 459.23 1382.83 459.11C1386.65 458.99 1390.64 459.20 1394.62 459.57C1398.60 459.94 1402.69 460.58 1406.71 461.32C1410.72 462.07 1414.77 463.03 1418.69 464.05C1422.61 465.06 1426.47 466.21 1430.22 467.43C1433.97 468.65 1437.63 469.97 1441.20 471.38C1444.78 472.79 1448.26 474.30 1451.67 475.90C1455.08 477.50 1458.40 479.20 1461.66 480.99C1464.92 482.78 1468.08 484.67 1471.21 486.64C1474.34 488.60 1477.39 490.66 1480.43 492.78C1483.46 494.90 1486.44 497.10 1489.43 499.34C1492.41 501.58 1495.36 503.90 1498.32 506.24C1501.29 508.59 1504.26 510.98 1507.22 513.41C1510.18 515.85 1513.16 518.32 1516.10 520.84C1519.03 523.36 1521.97 525.93 1524.83 528.55C1527.69 531.17 1530.53 533.84 1533.28 536.57C1536.02 539.30 1538.73 542.09 1541.31 544.94C1543.90 547.80 1546.42 550.71 1548.80 553.69C1551.18 556.67 1553.47 559.72 1555.61 562.85C1557.74 565.97 1559.76 569.17 1561.60 572.44C1563.44 575.72 1565.15 579.07 1566.65 582.51C1568.16 585.95 1569.49 589.48 1570.63 593.08C1571.77 596.68 1572.71 600.38 1573.49 604.11C1574.27 607.84 1574.87 611.65 1575.32 615.48C1575.76 619.30 1576.04 623.18 1576.18 627.06C1576.31 630.94 1576.29 634.85 1576.14 638.73C1576.00 642.62 1575.70 646.52 1575.29 650.38C1574.89 654.23 1574.34 658.08 1573.70 661.87C1573.06 665.65 1572.29 669.40 1571.43 673.11C1570.56 676.82 1569.59 680.48 1568.52 684.11C1567.45 687.73 1566.28 691.32 1565.02 694.87C1563.76 698.42 1562.40 701.93 1560.96 705.41C1559.53 708.88 1558.00 712.32 1556.39 715.73C1554.79 719.14 1553.10 722.51 1551.35 725.86C1549.60 729.20 1547.76 732.51 1545.87 735.79C1543.98 739.08 1542.01 742.33 1540.00 745.55C1537.98 748.78 1535.90 751.98 1533.77 755.15C1531.64 758.32 1529.45 761.47 1527.23 764.59C1525.00 767.72 1522.72 770.82 1520.41 773.89C1518.10 776.97 1515.74 780.03 1513.36 783.07C1510.98 786.11 1508.55 789.12 1506.11 792.12C1503.67 795.12 1501.20 798.11 1498.71 801.07C1496.23 804.04 1493.72 806.99 1491.20 809.93C1488.68 812.87 1486.14 815.79 1483.61 818.70C1481.07 821.62 1478.53 824.52 1475.99 827.41C1473.44 830.30 1470.90 833.18 1468.35 836.05C1465.80 838.92 1463.25 841.78 1460.70 844.62C1458.14 847.46 1455.58 850.30 1453.00 853.11C1450.43 855.93 1447.85 858.73 1445.26 861.51C1442.67 864.30 1440.07 867.07 1437.46 869.82C1434.85 872.57 1432.22 875.30 1429.58 878.02C1426.94 880.73 1424.28 883.43 1421.61 886.11C1418.93 888.78 1416.24 891.44 1413.53 894.07C1410.81 896.71 1408.08 899.32 1405.33 901.91C1402.57 904.50 1399.80 907.07 1397.00 909.61C1394.19 912.15 1391.37 914.67 1388.52 917.16C1385.66 919.65 1382.78 922.12 1379.87 924.55C1376.96 926.99 1374.03 929.40 1371.06 931.79C1368.09 934.17 1365.08 936.52 1362.05 938.85C1359.02 941.17 1355.96 943.47 1352.87 945.74C1349.78 948.01 1346.67 950.25 1343.53 952.46C1340.39 954.68 1337.23 956.87 1334.05 959.03C1330.87 961.19 1327.67 963.32 1324.46 965.43C1321.24 967.54 1318.01 969.62 1314.76 971.68C1311.52 973.74 1308.25 975.77 1304.98 977.78C1301.71 979.79 1298.43 981.78 1295.14 983.74C1291.86 985.70 1288.56 987.64 1285.26 989.55C1281.96 991.46 1278.65 993.35 1275.33 995.21C1272.02 997.07 1268.69 998.91 1265.36 1000.72C1262.02 1002.52 1258.67 1004.30 1255.31 1006.05C1251.96 1007.80 1248.58 1009.51 1245.20 1011.20C1241.81 1012.88 1238.41 1014.53 1234.99 1016.15C1231.57 1017.77 1228.14 1019.35 1224.69 1020.89C1221.23 1022.44 1217.76 1023.95 1214.27 1025.41C1210.78 1026.88 1207.27 1028.31 1203.73 1029.70C1200.20 1031.09 1196.64 1032.44 1193.06 1033.74C1189.48 1035.05 1185.87 1036.31 1182.24 1037.53C1178.61 1038.74 1174.95 1039.92 1171.26 1041.04C1167.58 1042.16 1163.86 1043.25 1160.12 1044.26C1156.38 1045.28 1152.61 1046.25 1148.83 1047.14C1145.05 1048.02 1141.25 1048.84 1137.44 1049.57C1133.63 1050.29 1129.81 1050.94 1125.99 1051.47C1122.16 1052.00 1118.33 1052.44 1114.51 1052.75C1110.68 1053.06 1106.85 1053.27 1103.04 1053.32C1099.22 1053.38 1095.41 1053.32 1091.62 1053.10C1087.83 1052.88 1084.05 1052.53 1080.30 1051.99C1076.55 1051.46 1072.80 1050.78 1069.11 1049.91C1065.41 1049.05 1061.73 1048.02 1058.12 1046.82C1054.52 1045.62 1050.94 1044.26 1047.46 1042.73C1043.98 1041.21 1040.55 1039.52 1037.24 1037.67C1033.92 1035.83 1030.68 1033.82 1027.57 1031.66C1024.46 1029.50 1021.44 1027.18 1018.58 1024.71C1015.71 1022.25 1012.96 1019.62 1010.38 1016.86C1007.80 1014.09 1005.35 1011.17 1003.09 1008.11C1000.83 1005.05 998.74 1001.83 996.82 998.50C994.91 995.17 993.17 991.69 991.59 988.14C990.00 984.60 988.58 980.92 987.30 977.22C986.01 973.51 984.89 969.71 983.88 965.90C982.87 962.10 982.01 958.23 981.25 954.39C980.49 950.56 979.87 946.69 979.33 942.87C978.80 939.05 978.37 935.26 978.04 931.50C977.71 927.74 977.49 924.02 977.36 920.30C977.23 916.58 977.20 912.89 977.27 909.19C977.34 905.49 977.51 901.81 977.78 898.09C978.05 894.38 978.42 890.68 978.89 886.93C979.36 883.18 979.92 879.42 980.59 875.61Z" stroke="#1a1b2b" stroke-width="9.2"/>
<path d="M993.94 830.30C995.56 826.75 997.30 823.26 999.20 819.94C1001.09 816.61 1003.13 813.39 1005.33 810.36C1007.53 807.34 1009.88 804.44 1012.41 801.78C1014.93 799.12 1017.63 796.65 1020.48 794.40C1023.33 792.15 1026.37 790.14 1029.51 788.27C1032.66 786.40 1035.97 784.74 1039.35 783.19C1042.73 781.63 1046.25 780.25 1049.81 778.94" stroke="#f2f0e4" stroke-width="17.6" stroke-linecap="butt"/>
<path d="M989.51 841.26C990.86 837.54 992.33 833.86 993.94 830.30C995.56 826.75 997.30 823.26 999.20 819.94C1001.09 816.61 1003.13 813.39 1005.33 810.36C1007.53 807.34 1009.88 804.44 1012.41 801.78C1014.93 799.12 1017.63 796.65 1020.48 794.40C1023.33 792.15 1026.37 790.14 1029.51 788.27C1032.66 786.40 1035.97 784.74 1039.35 783.19C1042.73 781.63 1046.25 780.25 1049.81 778.94C1053.36 777.62 1057.03 776.45 1060.70 775.30" stroke="#1a1b2b" stroke-width="9.2" stroke-linecap="butt"/>
<path d="M1071.85 772.07C1075.58 771.02 1079.34 770.02 1083.09 769.02C1086.84 768.03 1090.60 767.06 1094.37 766.09C1098.13 765.13 1101.89 764.18 1105.66 763.24C1109.42 762.30 1113.19 761.37 1116.96 760.44C1120.72 759.50 1124.49 758.58 1128.25 757.65C1132.01 756.72 1135.77 755.80 1139.52 754.86C1143.27 753.92 1147.02 752.98 1150.76 752.02" stroke="#f2f0e4" stroke-width="17.6" stroke-linecap="butt"/>
<path d="M1060.70 775.30C1064.37 774.16 1068.12 773.11 1071.85 772.07C1075.58 771.02 1079.34 770.02 1083.09 769.02C1086.84 768.03 1090.60 767.06 1094.37 766.09C1098.13 765.13 1101.89 764.18 1105.66 763.24C1109.42 762.30 1113.19 761.37 1116.96 760.44C1120.72 759.50 1124.49 758.58 1128.25 757.65C1132.01 756.72 1135.77 755.80 1139.52 754.86C1143.27 753.92 1147.02 752.98 1150.76 752.02C1154.50 751.07 1158.24 750.10 1161.96 749.12" stroke="#1a1b2b" stroke-width="9.2" stroke-linecap="butt"/>
<path d="M1145.62 785.70C1147.41 782.34 1148.97 778.81 1150.19 775.22C1151.41 771.64 1152.32 767.93 1152.92 764.20C1153.53 760.47 1153.76 756.66 1153.81 752.84C1153.85 749.03 1153.59 745.16 1153.21 741.29C1152.83 737.43 1152.20 733.54 1151.53 729.67C1150.86 725.80 1150.02 721.92 1149.19 718.10C1148.36 714.27 1147.43 710.45 1146.58 706.70" stroke="#f2f0e4" stroke-width="17.6" stroke-linecap="butt"/>
<path d="M1139.43 795.37C1141.73 792.33 1143.83 789.06 1145.62 785.70C1147.41 782.34 1148.97 778.81 1150.19 775.22C1151.41 771.64 1152.32 767.93 1152.92 764.20C1153.53 760.47 1153.76 756.66 1153.81 752.84C1153.85 749.03 1153.59 745.16 1153.21 741.29C1152.83 737.43 1152.20 733.54 1151.53 729.67C1150.86 725.80 1150.02 721.92 1149.19 718.10C1148.36 714.27 1147.43 710.45 1146.58 706.70C1145.73 702.95 1144.88 699.27 1144.10 695.58" stroke="#1a1b2b" stroke-width="9.2" stroke-linecap="butt"/>
<path d="M1248.49 719.70C1251.93 718.13 1255.35 716.50 1258.73 714.80C1262.12 713.11 1265.48 711.35 1268.81 709.53C1272.14 707.71 1275.44 705.82 1278.71 703.86C1281.98 701.89 1285.21 699.86 1288.41 697.76C1291.60 695.66 1294.76 693.49 1297.88 691.25C1300.99 689.02 1304.06 686.71 1307.08 684.34C1310.10 681.97 1313.07 679.54 1315.98 677.04" stroke="#f2f0e4" stroke-width="17.6" stroke-linecap="butt"/>
<path d="M1238.09 724.26C1241.58 722.79 1245.05 721.28 1248.49 719.70C1251.93 718.13 1255.35 716.50 1258.73 714.80C1262.12 713.11 1265.48 711.35 1268.81 709.53C1272.14 707.71 1275.44 705.82 1278.71 703.86C1281.98 701.89 1285.21 699.86 1288.41 697.76C1291.60 695.66 1294.76 693.49 1297.88 691.25C1300.99 689.02 1304.06 686.71 1307.08 684.34C1310.10 681.97 1313.07 679.54 1315.98 677.04C1318.89 674.54 1321.75 671.98 1324.55 669.36" stroke="#1a1b2b" stroke-width="9.2" stroke-linecap="butt"/>
<path d="M1332.75 661.31C1335.41 658.56 1338.01 655.76 1340.54 652.90C1343.07 650.04 1345.52 647.12 1347.90 644.15C1350.27 641.17 1352.57 638.14 1354.78 635.06C1356.99 631.97 1359.13 628.83 1361.16 625.65C1363.20 622.46 1365.15 619.21 1367.00 615.92C1368.85 612.63 1370.61 609.28 1372.26 605.89C1373.92 602.50 1375.47 599.06 1376.92 595.58" stroke="#f2f0e4" stroke-width="17.6" stroke-linecap="butt"/>
<path d="M1324.55 669.36C1327.34 666.74 1330.08 664.05 1332.75 661.31C1335.41 658.56 1338.01 655.76 1340.54 652.90C1343.07 650.04 1345.52 647.12 1347.90 644.15C1350.27 641.17 1352.57 638.14 1354.78 635.06C1356.99 631.97 1359.13 628.83 1361.16 625.65C1363.20 622.46 1365.15 619.21 1367.00 615.92C1368.85 612.63 1370.61 609.28 1372.26 605.89C1373.92 602.50 1375.47 599.06 1376.92 595.58C1378.36 592.09 1379.71 588.56 1380.93 584.98" stroke="#1a1b2b" stroke-width="9.2" stroke-linecap="butt"/>
<path d="M1353.24 468.89C1355.80 466.69 1358.66 464.88 1361.75 463.44C1364.83 462.01 1368.23 461.01 1371.74 460.29C1375.26 459.57 1379.02 459.23 1382.83 459.11C1386.65 458.99 1390.64 459.20 1394.62 459.57C1398.60 459.94 1402.69 460.58 1406.71 461.32C1410.72 462.07 1414.77 463.03 1418.69 464.05C1422.61 465.06 1426.47 466.21 1430.22 467.43" stroke="#f2f0e4" stroke-width="17.6" stroke-linecap="butt"/>
<path d="M1346.35 476.63C1348.41 473.75 1350.67 471.09 1353.24 468.89C1355.80 466.69 1358.66 464.88 1361.75 463.44C1364.83 462.01 1368.23 461.01 1371.74 460.29C1375.26 459.57 1379.02 459.23 1382.83 459.11C1386.65 458.99 1390.64 459.20 1394.62 459.57C1398.60 459.94 1402.69 460.58 1406.71 461.32C1410.72 462.07 1414.77 463.03 1418.69 464.05C1422.61 465.06 1426.47 466.21 1430.22 467.43C1433.97 468.65 1437.63 469.97 1441.20 471.38" stroke="#1a1b2b" stroke-width="9.2" stroke-linecap="butt"/>
<path d="M1126.18 351.16C1122.43 351.90 1118.68 352.67 1114.94 353.49C1111.20 354.31 1107.46 355.17 1103.74 356.07C1100.02 356.97 1096.31 357.91 1092.61 358.90C1088.91 359.89 1085.23 360.92 1081.56 362.00C1077.89 363.08 1074.23 364.21 1070.60 365.38C1066.96 366.55 1063.34 367.77 1059.74 369.04C1056.14 370.32 1052.56 371.63 1049.01 373.00" stroke="#f2f0e4" stroke-width="17.6" stroke-linecap="butt"/>
<path d="M1137.47 349.06C1133.70 349.72 1129.94 350.42 1126.18 351.16C1122.43 351.90 1118.68 352.67 1114.94 353.49C1111.20 354.31 1107.46 355.17 1103.74 356.07C1100.02 356.97 1096.31 357.91 1092.61 358.90C1088.91 359.89 1085.23 360.92 1081.56 362.00C1077.89 363.08 1074.23 364.21 1070.60 365.38C1066.96 366.55 1063.34 367.77 1059.74 369.04C1056.14 370.32 1052.56 371.63 1049.01 373.00C1045.45 374.37 1041.92 375.79 1038.41 377.27" stroke="#1a1b2b" stroke-width="9.2" stroke-linecap="butt"/>
<path d="M1102.83 820.74C1106.42 819.81 1109.95 818.50 1113.32 816.92C1116.69 815.34 1119.97 813.40 1123.06 811.24C1126.15 809.09 1129.11 806.62 1131.84 803.97C1134.57 801.33 1137.13 798.42 1139.43 795.37C1141.73 792.33 1143.83 789.06 1145.62 785.70C1147.41 782.34 1148.97 778.81 1150.19 775.22C1151.41 771.64 1152.32 767.93 1152.92 764.20" stroke="#f2f0e4" stroke-width="17.6" stroke-linecap="butt"/>
<path d="M1091.82 822.49C1095.55 822.23 1099.25 821.67 1102.83 820.74C1106.42 819.81 1109.95 818.50 1113.32 816.92C1116.69 815.34 1119.97 813.40 1123.06 811.24C1126.15 809.09 1129.11 806.62 1131.84 803.97C1134.57 801.33 1137.13 798.42 1139.43 795.37C1141.73 792.33 1143.83 789.06 1145.62 785.70C1147.41 782.34 1148.97 778.81 1150.19 775.22C1151.41 771.64 1152.32 767.93 1152.92 764.20C1153.53 760.47 1153.76 756.66 1153.81 752.84" stroke="#1a1b2b" stroke-width="9.2" stroke-linecap="butt"/>
<path d="M1226.45 910.40C1225.49 914.13 1224.55 917.86 1223.62 921.59C1222.69 925.32 1221.77 929.05 1220.86 932.77C1219.96 936.50 1219.06 940.22 1218.18 943.95C1217.30 947.67 1216.44 951.39 1215.60 955.11C1214.75 958.84 1213.92 962.56 1213.12 966.29C1212.31 970.01 1211.52 973.74 1210.76 977.46C1209.99 981.19 1209.25 984.92 1208.54 988.65" stroke="#f2f0e4" stroke-width="17.6" stroke-linecap="butt"/>
<path d="M1229.36 899.21C1228.37 902.93 1227.40 906.67 1226.45 910.40C1225.49 914.13 1224.55 917.86 1223.62 921.59C1222.69 925.32 1221.77 929.05 1220.86 932.77C1219.96 936.50 1219.06 940.22 1218.18 943.95C1217.30 947.67 1216.44 951.39 1215.60 955.11C1214.75 958.84 1213.92 962.56 1213.12 966.29C1212.31 970.01 1211.52 973.74 1210.76 977.46C1209.99 981.19 1209.25 984.92 1208.54 988.65C1207.82 992.39 1207.13 996.12 1206.47 999.86" stroke="#1a1b2b" stroke-width="9.2" stroke-linecap="butt"/>
<path d="M1208.54 988.65C1207.82 992.39 1207.13 996.12 1206.47 999.86C1205.81 1003.60 1205.17 1007.35 1204.57 1011.09C1203.96 1014.84 1203.39 1018.60 1202.85 1022.35C1202.31 1026.11 1201.80 1029.88 1201.33 1033.65C1200.86 1037.42 1200.42 1041.20 1200.02 1044.98C1199.62 1048.77 1199.26 1052.56 1198.94 1056.36C1198.61 1060.17 1198.33 1063.98 1198.09 1067.80" stroke="#f2f0e4" stroke-width="17.6" stroke-linecap="butt"/>
<path d="M1210.76 977.46C1209.99 981.19 1209.25 984.92 1208.54 988.65C1207.82 992.39 1207.13 996.12 1206.47 999.86C1205.81 1003.60 1205.17 1007.35 1204.57 1011.09C1203.96 1014.84 1203.39 1018.60 1202.85 1022.35C1202.31 1026.11 1201.80 1029.88 1201.33 1033.65C1200.86 1037.42 1200.42 1041.20 1200.02 1044.98C1199.62 1048.77 1199.26 1052.56 1198.94 1056.36C1198.61 1060.17 1198.33 1063.98 1198.09 1067.80C1197.86 1071.62 1197.66 1075.44 1197.51 1079.28" stroke="#1a1b2b" stroke-width="9.2" stroke-linecap="butt"/>
<path d="M1285.26 989.55C1281.96 991.46 1278.65 993.35 1275.33 995.21C1272.02 997.07 1268.69 998.91 1265.36 1000.72C1262.02 1002.52 1258.67 1004.30 1255.31 1006.05C1251.96 1007.80 1248.58 1009.51 1245.20 1011.20C1241.81 1012.88 1238.41 1014.53 1234.99 1016.15C1231.57 1017.77 1228.14 1019.35 1224.69 1020.89C1221.23 1022.44 1217.76 1023.95 1214.27 1025.41" stroke="#f2f0e4" stroke-width="17.6" stroke-linecap="butt"/>
<path d="M1295.14 983.74C1291.86 985.70 1288.56 987.64 1285.26 989.55C1281.96 991.46 1278.65 993.35 1275.33 995.21C1272.02 997.07 1268.69 998.91 1265.36 1000.72C1262.02 1002.52 1258.67 1004.30 1255.31 1006.05C1251.96 1007.80 1248.58 1009.51 1245.20 1011.20C1241.81 1012.88 1238.41 1014.53 1234.99 1016.15C1231.57 1017.77 1228.14 1019.35 1224.69 1020.89C1221.23 1022.44 1217.76 1023.95 1214.27 1025.41C1210.78 1026.88 1207.27 1028.31 1203.73 1029.70" stroke="#1a1b2b" stroke-width="9.2" stroke-linecap="butt"/>
<path d="M1492.26 475.45C1493.63 479.05 1494.94 482.68 1496.19 486.34C1497.43 490.00 1498.62 493.69 1499.74 497.40C1500.86 501.11 1501.93 504.84 1502.93 508.60C1503.93 512.35 1504.86 516.13 1505.74 519.92C1506.61 523.71 1507.44 527.52 1508.18 531.34C1508.92 535.16 1509.63 539.01 1510.20 542.83C1510.77 546.66 1511.28 550.50 1511.60 554.31" stroke="#f2f0e4" stroke-width="17.6" stroke-linecap="butt"/>
<path d="M1487.97 464.73C1489.46 468.27 1490.89 471.84 1492.26 475.45C1493.63 479.05 1494.94 482.68 1496.19 486.34C1497.43 490.00 1498.62 493.69 1499.74 497.40C1500.86 501.11 1501.93 504.84 1502.93 508.60C1503.93 512.35 1504.86 516.13 1505.74 519.92C1506.61 523.71 1507.44 527.52 1508.18 531.34C1508.92 535.16 1509.63 539.01 1510.20 542.83C1510.77 546.66 1511.28 550.50 1511.60 554.31C1511.93 558.12 1512.16 561.92 1512.17 565.68" stroke="#1a1b2b" stroke-width="9.2" stroke-linecap="butt"/>
</g></svg><!--/KNOT-->
</body></html>
